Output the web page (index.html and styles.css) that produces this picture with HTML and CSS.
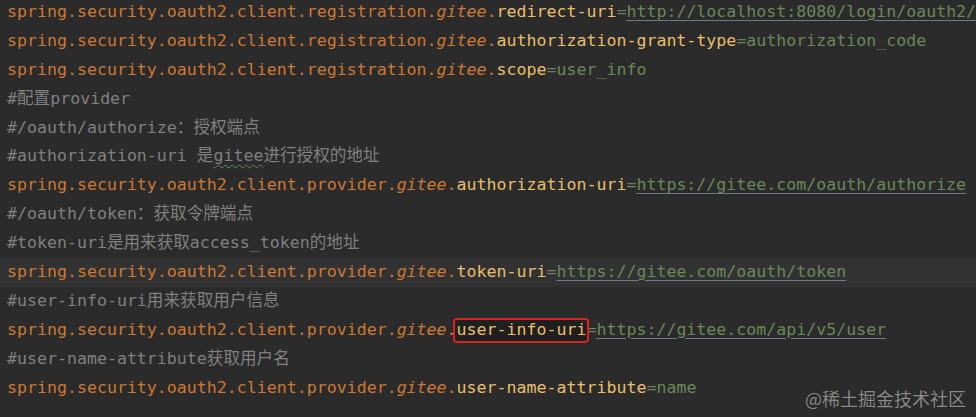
FILE: index.html
```html
<!DOCTYPE html>
<html lang="zh">
<head>
<meta charset="utf-8">
<title>application.properties</title>
<link rel="stylesheet" href="styles.css">
</head>
<body>
<div class="editor">
  <div class="line"><span class="k">spring.security.oauth2.client.registration.</span><span class="k i">gitee</span><span class="k">.</span><span class="kl">redirect-uri</span><span class="eq">=</span><span class="v url">http://localhost:8080/login/oauth2/code/gitee</span></div>
  <div class="line"><span class="k">spring.security.oauth2.client.registration.</span><span class="k i">gitee</span><span class="k">.</span><span class="kl">authorization-grant-type</span><span class="eq">=</span><span class="v">authorization_code</span></div>
  <div class="line"><span class="k">spring.security.oauth2.client.registration.</span><span class="k i">gitee</span><span class="k">.</span><span class="kl">scope</span><span class="eq">=</span><span class="v">user_info</span></div>
  <div class="line c">#配置provider</div>
  <div class="line c">#/oauth/authorize：授权端点</div>
  <div class="line c">#authorization-uri 是<span class="typo">gitee</span>进行授权的地址</div>
  <div class="line"><span class="k">spring.security.oauth2.client.provider.</span><span class="k i">gitee</span><span class="k">.</span><span class="kl">authorization-uri</span><span class="eq">=</span><span class="v url">https://gitee.com/oauth/authorize</span></div>
  <div class="line c">#/oauth/token：获取令牌端点</div>
  <div class="line c">#token-uri是用来获取access_token的地址</div>
  <div class="line current"><span class="k">spring.security.oauth2.client.provider.</span><span class="k i">gitee</span><span class="k">.</span><span class="kl">token-uri</span><span class="eq">=</span><span class="v url">https://gitee.com/oauth/token</span></div>
  <div class="line c">#user-info-uri用来获取用户信息</div>
  <div class="line"><span class="k">spring.security.oauth2.client.provider.</span><span class="k i">gitee</span><span class="k">.</span><span class="kl boxed">user-info-uri</span><span class="eq">=</span><span class="v url">https://gitee.com/api/v5/user</span></div>
  <div class="line c">#user-name-attribute获取用户名</div>
  <div class="line"><span class="k">spring.security.oauth2.client.provider.</span><span class="k i">gitee</span><span class="k">.</span><span class="kl">user-name-attribute</span><span class="eq">=</span><span class="v">name</span></div>
</div>
<div class="watermark">@稀土掘金技术社区</div>
</body>
</html>
```

FILE: styles.css
```css
html, body {
  margin: 0;
  padding: 0;
  background: #2b2b2b;
  width: 976px;
  height: 417px;
  overflow: hidden;
}

body {
  position: relative;
}

.editor {
  margin-top: -2px;
  font-family: "DejaVu Sans Mono", "Liberation Mono", "Noto Sans CJK SC", monospace;
  font-size: 16.6px;
  line-height: 28.9px;
}

.line {
  height: 28.9px;
  padding-left: 7px;
  white-space: pre;
  overflow: hidden;
}

.line.current {
  background: #323232;
}

.k {
  color: #cc7832;
}

.i {
  font-style: italic;
}

.kl {
  color: #e8bf6a;
}

.eq {
  color: #6f7f66;
}

.v {
  color: #6a8759;
}

.url {
  text-decoration: underline;
  text-decoration-color: #6f7a87;
  text-underline-offset: 3px;
}

.c {
  color: #808080;
}

.typo {
  text-decoration: underline wavy #5f8a5f;
  text-decoration-thickness: 1px;
  text-underline-offset: 3px;
}

.boxed {
  display: inline-block;
  position: relative;
  z-index: 0;
  line-height: 28.9px;
}

.boxed::before {
  content: "";
  position: absolute;
  left: -4px;
  right: -3px;
  top: 2px;
  bottom: 2px;
  border: 2px solid #d8231f;
  border-radius: 4px;
  background: #1f1f1f;
  z-index: -1;
}

.watermark {
  position: absolute;
  right: 10px;
  bottom: 7px;
  font-family: "Noto Sans CJK SC", sans-serif;
  font-size: 18px;
  line-height: 24px;
  color: #8a8a8a;
  text-shadow: 0 0 1px #1a1a1a;
}
```
